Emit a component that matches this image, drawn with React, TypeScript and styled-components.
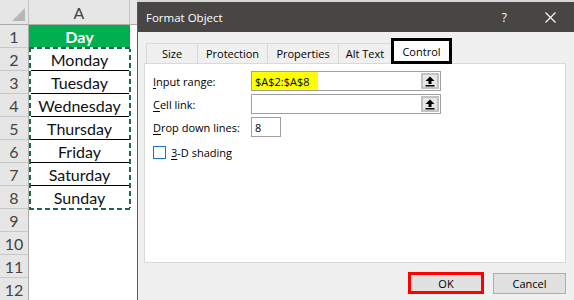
import React from "react";
import styled, { createGlobalStyle } from "styled-components";

const GlobalStyle = createGlobalStyle`
  html, body {
    margin: 0;
    padding: 0;
    background: #ffffff;
  }
  * {
    box-sizing: border-box;
  }
`;

const DAYS = ["Monday", "Tuesday", "Wednesday", "Thursday", "Friday", "Saturday", "Sunday"];
const EMPTY_ROWS = [9, 10, 11, 12];
const TABS = [
  { label: "Size", width: 52 },
  { label: "Protection", width: 70 },
  { label: "Properties", width: 71 },
  { label: "Alt Text", width: 53 },
];

const Screen = styled.div`
  display: flex;
  width: 574px;
  height: 300px;
  overflow: hidden;
  background: #d6d6d6;
`;

/* ---------- spreadsheet ---------- */

const Sheet = styled.div`
  width: 137px;
  flex-shrink: 0;
  display: flex;
  flex-direction: column;
  background: #ffffff;
  font-family: Lato, "Liberation Sans", sans-serif;
`;
const SheetRow = styled.div<{ $h?: number }>`
  display: grid;
  grid-template-columns: 29px 101px 1fr;
  height: ${(p) => p.$h || 23}px;
  flex-shrink: 0;
`;
const Corner = styled.div`
  position: relative;
  background: #e6e6e6;
  border-right: 1px solid #c4c4c4;
  border-bottom: 1px solid #ababab;

  &::after {
    content: "";
    position: absolute;
    right: 3px;
    bottom: 3px;
    border-style: solid;
    border-width: 0 0 13px 13px;
    border-color: transparent transparent #b7b7b7 transparent;
  }
`;
const ColHeader = styled.div`
  display: flex;
  align-items: center;
  justify-content: center;
  background: #e6e6e6;
  border-right: 1px solid #c4c4c4;
  border-bottom: 1px solid #ababab;
  color: #444444;
  font-size: 16px;
`;
const RowHeader = styled.div`
  display: flex;
  align-items: center;
  justify-content: center;
  background: #e6e6e6;
  border-right: 1px solid #ababab;
  border-bottom: 1px solid #c8c8c8;
  color: #444444;
  font-size: 16px;
`;
const Cell = styled.div<{ $head?: boolean; $lined?: boolean }>`
  display: flex;
  align-items: center;
  justify-content: center;
  background: ${(p) => (p.$head ? "#00b050" : "#ffffff")};
  color: ${(p) => (p.$head ? "#ffffff" : "#111111")};
  font-weight: ${(p) => (p.$head ? 700 : 400)};
  font-size: 16px;
  border-bottom: 1px solid ${(p) => (p.$lined ? "#000000" : "transparent")};
`;
const Filler = styled.div`
  background: #ffffff;
`;
const FillerHead = styled.div`
  background: #e6e6e6;
  border-bottom: 1px solid #ababab;
`;
const Selection = styled.div`
  position: relative;

  &::after {
    content: "";
    position: absolute;
    top: -1px;
    bottom: -1px;
    left: 29px;
    width: 102px;
    pointer-events: none;
    background:
      repeating-linear-gradient(90deg, #1d6b40 0 5px, #ffffff 5px 8px) left top / 100% 2px no-repeat,
      repeating-linear-gradient(90deg, #1d6b40 0 5px, #ffffff 5px 8px) left bottom / 100% 2px no-repeat,
      repeating-linear-gradient(180deg, #1d6b40 0 5px, #ffffff 5px 8px) left top / 2px 100% no-repeat,
      repeating-linear-gradient(180deg, #1d6b40 0 5px, #ffffff 5px 8px) right top / 2px 100% no-repeat;
  }
`;

/* ---------- dialog ---------- */

const Dialog = styled.div`
  flex: 1;
  display: flex;
  flex-direction: column;
  margin-top: 2px;
  background: #f0f0f0;
  border-left: 1px solid #5a5a5a;
  font-family: "Open Sans", "Liberation Sans", sans-serif;
  font-size: 11px;
  color: #000000;
`;
const TitleBar = styled.div`
  height: 30px;
  flex-shrink: 0;
  display: flex;
  align-items: center;
  padding-left: 8px;
  background: #484644;
  color: #ffffff;
  font-size: 11.5px;
`;
const TitleText = styled.span`
  flex: 1;
`;
const HelpMark = styled.span`
  font-size: 12px;
  margin-right: 38px;
`;
const CloseBox = styled.span`
  display: flex;
  margin-right: 18px;
`;
const Body = styled.div`
  flex: 1;
  display: flex;
  flex-direction: column;
  padding: 11px 8px 0 6px;
`;
const TabStrip = styled.div`
  display: flex;
  align-items: flex-end;
  height: 20px;
  padding-left: 2px;
  position: relative;
  z-index: 1;
`;
const Tab = styled.div<{ $w: number }>`
  width: ${(p) => p.$w}px;
  height: 20px;
  display: flex;
  align-items: center;
  justify-content: center;
  border-top: 1px solid #d9d9d9;
  border-right: 1px solid #d9d9d9;
  background: #f0f0f0;

  &:first-child {
    border-left: 1px solid #d9d9d9;
  }
`;
const ActiveTab = styled.div`
  width: 61px;
  height: 26px;
  margin-left: -1px;
  margin-bottom: -1px;
  display: flex;
  align-items: center;
  justify-content: center;
  padding-top: 1px;
  background: #ffffff;
  border: 3px solid #000000;
`;
const Panel = styled.div`
  height: 200px;
  background: #ffffff;
  border: 1px solid #d9d9d9;
  padding: 7px 8px;
  display: flex;
  flex-direction: column;
  gap: 3px;
`;
const FieldRow = styled.div`
  display: grid;
  grid-template-columns: 98px auto;
  align-items: center;
  height: 20px;
`;
const Key = styled.span`
  text-decoration: underline;
  text-underline-offset: 2px;
`;
const TextBox = styled.div<{ $w: number }>`
  width: ${(p) => p.$w}px;
  height: 20px;
  display: flex;
  align-items: center;
  background: #ffffff;
  border: 1px solid #a0a0a0;
  padding: 0 1px 0 3px;
`;
const Highlight = styled.span`
  background: #ffff00;
  align-self: stretch;
  display: flex;
  align-items: center;
  margin-left: -3px;
  padding: 0 8px 0 3px;
`;
const BoxValue = styled.span`
  flex: 1;
  display: flex;
  align-self: stretch;
  align-items: center;
`;
const PickButton = styled.div`
  width: 18px;
  height: 16px;
  display: flex;
  align-items: center;
  justify-content: center;
  background: #e6e6e6;
  border: 2px solid #c2c2c2;
`;
const CheckRow = styled.label`
  display: flex;
  align-items: center;
  gap: 5px;
  margin-top: 6px;
  height: 13px;
`;
const CheckBox = styled.span`
  display: block;
  flex-shrink: 0;
  width: 13px;
  height: 13px;
  border: 1px solid #1c6fd4;
  background: #ffffff;
`;
const ButtonRow = styled.div`
  display: flex;
  justify-content: flex-end;
  align-items: flex-end;
  gap: 9px;
  padding-top: 9px;
`;
const DialogButton = styled.button<{ $marked?: boolean }>`
  width: ${(p) => (p.$marked ? 76 : 73)}px;
  height: ${(p) => (p.$marked ? 22 : 21)}px;
  padding: 0;
  font-family: "Open Sans", "Liberation Sans", sans-serif;
  font-size: 11px;
  color: #000000;
  background: #e1e1e1;
  border: ${(p) => (p.$marked ? "3px solid #ff0000" : "1px solid #adadad")};
`;

const UpArrow = () => (
  <svg width="10" height="11" viewBox="0 0 10 11">
    <path d="M5 0.5 L9.5 5 L6.5 5 L6.5 8 L3.5 8 L3.5 5 L0.5 5 Z" fill="#000" />
    <rect x="0.5" y="9" width="9" height="1.5" fill="#000" />
  </svg>
);

const CloseIcon = () => (
  <svg width="11" height="11" viewBox="0 0 11 11">
    <path d="M0.5 0.5 L10.5 10.5 M10.5 0.5 L0.5 10.5" stroke="#fff" strokeWidth="1.1" />
  </svg>
);

export default function App() {
  return (
    <Screen>
      <GlobalStyle />
      <Sheet>
        <SheetRow $h={25}>
          <Corner />
          <ColHeader>A</ColHeader>
          <FillerHead />
        </SheetRow>
        <SheetRow>
          <RowHeader>1</RowHeader>
          <Cell $head>Day</Cell>
          <Filler />
        </SheetRow>
        <Selection>
          {DAYS.map((day, i) => (
            <SheetRow key={day}>
              <RowHeader>{i + 2}</RowHeader>
              <Cell $lined={i < DAYS.length - 1}>{day}</Cell>
              <Filler />
            </SheetRow>
          ))}
        </Selection>
        {EMPTY_ROWS.map((n) => (
          <SheetRow key={n}>
            <RowHeader>{n}</RowHeader>
            <Cell />
            <Filler />
          </SheetRow>
        ))}
      </Sheet>

      <Dialog>
        <TitleBar>
          <TitleText>Format Object</TitleText>
          <HelpMark>?</HelpMark>
          <CloseBox>
            <CloseIcon />
          </CloseBox>
        </TitleBar>
        <Body>
          <TabStrip>
            {TABS.map((t) => (
              <Tab key={t.label} $w={t.width}>
                {t.label}
              </Tab>
            ))}
            <ActiveTab>Control</ActiveTab>
          </TabStrip>
          <Panel>
            <FieldRow>
              <span>
                <Key>I</Key>nput range:
              </span>
              <TextBox $w={190}>
                <BoxValue>
                  <Highlight>$A$2:$A$8</Highlight>
                </BoxValue>
                <PickButton>
                  <UpArrow />
                </PickButton>
              </TextBox>
            </FieldRow>
            <FieldRow>
              <span>
                <Key>C</Key>ell link:
              </span>
              <TextBox $w={190}>
                <BoxValue />
                <PickButton>
                  <UpArrow />
                </PickButton>
              </TextBox>
            </FieldRow>
            <FieldRow>
              <span>
                <Key>D</Key>rop down lines:
              </span>
              <TextBox $w={30}>
                <BoxValue>8</BoxValue>
              </TextBox>
            </FieldRow>
            <CheckRow>
              <CheckBox />
              <span>
                <Key>3</Key>-D shading
              </span>
            </CheckRow>
          </Panel>
          <ButtonRow>
            <DialogButton $marked>OK</DialogButton>
            <DialogButton>Cancel</DialogButton>
          </ButtonRow>
        </Body>
      </Dialog>
    </Screen>
  );
}
